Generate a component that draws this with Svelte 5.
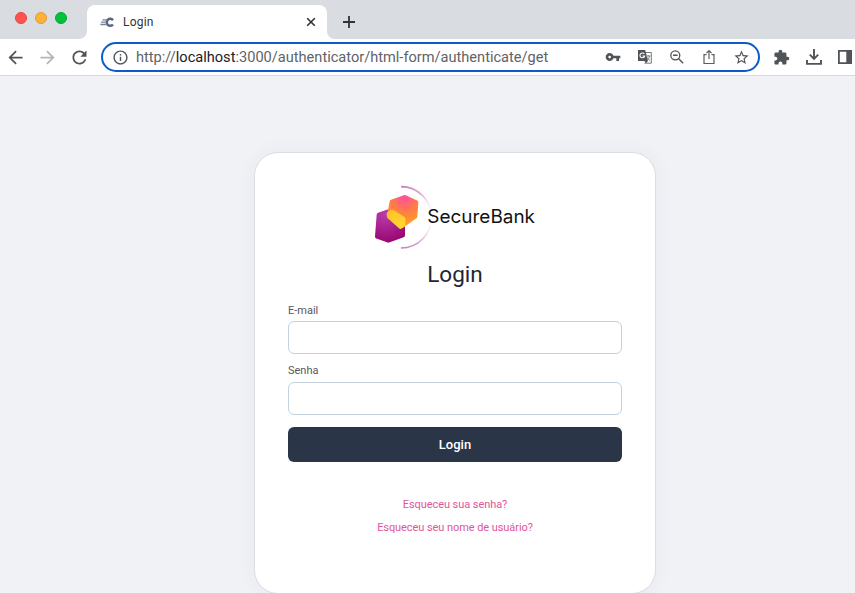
<script>
  let email = $state('');
  let password = $state('');
</script>

<div class="window">
  <header class="tabstrip">
    <div class="lights">
      <span class="light red"></span>
      <span class="light amber"></span>
      <span class="light green"></span>
    </div>
    <div class="tab">
      <svg class="favicon" width="14" height="12" viewBox="0 0 42 36">
        <path d="M39 12.500A10.500 10.500 0 1 0 39 25.500" fill="none" stroke="#5b6682" stroke-width="7.500" />
        <path d="M7 11.500h15M3 18.500h14M1 25.500h20" stroke="#7b849b" stroke-width="4" />
      </svg>
      <span class="tab-title">Login</span>
      <svg class="close" width="10" height="10" viewBox="0 0 10 10"><path d="M1.200 1.200l7.600 7.600M8.800 1.200L1.200 8.800" stroke="#303236" stroke-width="1.600" /></svg>
    </div>
    <svg class="plus" width="12" height="12" viewBox="0 0 12 12"><path d="M6 0v12M0 6h12" stroke="#303236" stroke-width="1.800" /></svg>
  </header>

  <div class="toolbar">
    <svg class="nav" width="21" height="21" viewBox="0 0 24 24"><path fill="#505357" d="M20 11H7.830l5.590-5.590L12 4l-8 8 8 8 1.410-1.410L7.830 13H20v-2z" /></svg>
    <svg class="nav" width="21" height="21" viewBox="0 0 24 24"><path fill="#b3b5b7" d="M12 4l-1.410 1.410L16.170 11H4v2h12.170l-5.580 5.590L12 20l8-8z" /></svg>
    <svg class="nav" width="21" height="21" viewBox="0 0 24 24"><path fill="#505357" d="M17.650 6.350C16.200 4.900 14.210 4 12 4c-4.420 0-7.990 3.580-7.990 8s3.570 8 7.990 8c3.730 0 6.840-2.550 7.730-6h-2.080c-.82 2.330-3.040 4-5.650 4-3.310 0-6-2.690-6-6s2.690-6 6-6c1.660 0 3.140.69 4.220 1.780L13 11h7V4l-2.350 2.350z" /></svg>
    <div class="omnibox">
      <svg class="info" width="17" height="17" viewBox="0 0 24 24"><path fill="#505357" d="M11 7h2v2h-2zm0 4h2v6h-2zm1-9C6.480 2 2 6.480 2 12s4.480 10 10 10 10-4.480 10-10S17.520 2 12 2zm0 18c-4.410 0-8-3.590-8-8s3.590-8 8-8 8 3.590 8 8-3.590 8-8 8z" /></svg>
      <span class="url">http://<b>localhost</b>:3000/authenticator/html-form/authenticate/get</span>
      <div class="actions">
        <svg width="16" height="16" viewBox="0 0 24 24"><path fill="#505357" d="M12.650 10C11.830 7.670 9.610 6 7 6c-3.310 0-6 2.690-6 6s2.690 6 6 6c2.610 0 4.830-1.670 5.650-4H17v4h4v-4h2v-4H12.650zM7 14c-1.100 0-2-.9-2-2s.9-2 2-2 2 .9 2 2-.9 2-2 2z" /></svg>
        <svg width="16" height="16" viewBox="0 0 16 16">
          <path d="M6.500 3.500h7.800v10.700H7.500" fill="#fff" stroke="#74777a" stroke-width="1" />
          <path d="M1 1h7.200l2.800 11H1z" fill="#505357" />
          <path d="M7.300 4.900A2.400 2.400 0 1 0 7.700 7H5.500" fill="none" stroke="#fff" stroke-width="1.100" />
          <path d="M9.500 7h4M11.300 6v1M10 11.500c1.500-1 2.200-2.500 2.400-4.500M10.200 8.500c.7 1.300 1.400 2.200 2.800 3" fill="none" stroke="#74777a" stroke-width=".9" />
          <path d="M7.500 12h3.500l-2.200 2.300z" fill="#505357" />
        </svg>
        <svg width="16" height="16" viewBox="0 0 16 16"><circle cx="6.300" cy="6.300" r="4.500" fill="none" stroke="#505357" stroke-width="1.300" /><path d="M9.700 9.700l4.500 4.500M4 6.300h4.600" stroke="#505357" stroke-width="1.400" /></svg>
        <svg width="16" height="16" viewBox="0 0 16 16"><path d="M5.500 5.700H3v8.800h10V5.700h-2.500M8 10V1.500M5.400 4.100L8 1.500l2.600 2.600" fill="none" stroke="#5b5e62" stroke-width="1.200" /></svg>
        <svg width="17" height="17" viewBox="0 0 24 24"><path fill="#505357" d="M22 9.240l-7.190-.62L12 2 9.190 8.630 2 9.240l5.460 4.730L5.820 21 12 17.270 18.180 21l-1.630-7.030L22 9.240zM12 15.400l-3.760 2.270 1-4.280-3.320-2.880 4.380-.38L12 6.100l1.710 4.040 4.380.38-3.320 2.880 1 4.280L12 15.400z" /></svg>
      </div>
    </div>
    <div class="extras">
      <svg width="17" height="17" viewBox="0 0 24 24"><path fill="#505357" d="M20.500 11H19V7c0-1.100-.9-2-2-2h-4V3.500C13 2.120 11.880 1 10.500 1S8 2.120 8 3.500V5H4c-1.100 0-1.990.9-1.990 2v3.800H3.500c1.490 0 2.700 1.210 2.700 2.700s-1.210 2.700-2.700 2.700H2V20c0 1.100.9 2 2 2h3.800v-1.500c0-1.490 1.210-2.700 2.700-2.700 1.490 0 2.700 1.210 2.700 2.700V22H17c1.100 0 2-.9 2-2v-4h1.500c1.380 0 2.500-1.120 2.500-2.500S21.880 11 20.500 11z" /></svg>
      <svg width="16" height="16" viewBox="0 0 16 16"><path d="M8 0v9.500M3.800 5.700L8 9.900l4.200-4.200M1 11v3.900h14V11" fill="none" stroke="#505357" stroke-width="1.900" /></svg>
      <svg width="14" height="14" viewBox="0 0 14 14"><path fill="#505357" fill-rule="evenodd" d="M0 0h14v14H0zM1.800 1.800v10.400H8.300V1.800z" /></svg>
    </div>
  </div>

  <main>
    <form class="card" onsubmit={(e) => e.preventDefault()}>
      <svg class="logo" width="180" height="80" viewBox="0 0 540 240" role="img" aria-label="SecureBank">
        <defs>
          <radialGradient id="sun" gradientUnits="userSpaceOnUse" cx="119" cy="66" r="78">
            <stop offset="0" stop-color="#ff50a0" />
            <stop offset=".5" stop-color="#ff7b46" />
            <stop offset="1" stop-color="#ff9d28" />
          </radialGradient>
          <radialGradient id="plum" gradientUnits="userSpaceOnUse" cx="60" cy="115" r="88">
            <stop offset="0" stop-color="#b93cab" />
            <stop offset="1" stop-color="#960570" />
          </radialGradient>
          <linearGradient id="gold" gradientUnits="userSpaceOnUse" x1="66" y1="102" x2="122" y2="158">
            <stop offset="0" stop-color="#ffc02c" />
            <stop offset="1" stop-color="#ffda2c" />
          </linearGradient>
          <linearGradient id="arc" gradientUnits="userSpaceOnUse" x1="108" y1="0" x2="200" y2="0">
            <stop offset="0" stop-color="#c878b8" />
            <stop offset=".6" stop-color="#dda5d0" />
            <stop offset="1" stop-color="#fff" />
          </linearGradient>
        </defs>
        <path d="M108 32A92 92 0 0 1 108 216" fill="none" stroke="url(#arc)" stroke-width="5" />
        <g stroke-width="12" stroke-linejoin="round">
          <path d="M41 116L74 105L114 130V178L70 194L36 182Z" fill="url(#plum)" stroke="url(#plum)" />
          <path d="M80 77L120 63L154 79L151 122L108 152L72 119Z" fill="url(#sun)" stroke="url(#sun)" />
          <path d="M71 113L82 107L115 128V147L106 152L72 122Z" fill="url(#gold)" stroke="url(#gold)" />
        </g>
        <text x="187" y="140" textLength="323" lengthAdjust="spacingAndGlyphs">SecureBank</text>
      </svg>
      <h1>Login</h1>
      <label for="email">E-mail</label>
      <input id="email" type="text" bind:value={email} />
      <label class="second" for="password">Senha</label>
      <input id="password" type="password" bind:value={password} />
      <button type="submit">Login</button>
      <div class="links">
        <a href="#senha">Esqueceu sua senha?</a>
        <a href="#usuario">Esqueceu seu nome de usuário?</a>
      </div>
    </form>
  </main>
</div>

<style>
  .window {
    width: 855px;
    height: 593px;
    overflow: hidden;
    display: flex;
    flex-direction: column;
    background: #f1f2f6;
    font-family: Roboto, 'Liberation Sans', sans-serif;
  }
  svg { display: block; flex: none; }
  .tabstrip {
    height: 39px;
    flex: none;
    display: flex;
    background: #d9dce1;
  }
  .lights { display: flex; gap: 8px; padding: 12px 0 0 15px; width: 87px; box-sizing: border-box; }
  .light { width: 12px; height: 12px; border-radius: 50%; box-sizing: border-box; border: 1px solid; }
  .red { background: #ff544f; border-color: #e5443f; }
  .amber { background: #ffb139; border-color: #e29a31; }
  .green { background: #00c23b; border-color: #00a833; }
  .tab {
    position: relative;
    width: 240px;
    height: 34px;
    margin-top: 5px;
    padding: 0 11px 0 13px;
    box-sizing: border-box;
    display: flex;
    align-items: center;
    background: #fff;
    border-radius: 8px 8px 0 0;
  }
  .tab::before, .tab::after {
    content: '';
    position: absolute;
    bottom: 0;
    width: 8px;
    height: 8px;
  }
  .tab::before { left: -8px; background: radial-gradient(circle at 0 0, #d9dce1 7.5px, #fff 8.5px); }
  .tab::after { right: -8px; background: radial-gradient(circle at 100% 0, #d9dce1 7.5px, #fff 8.5px); }
  .tab-title { margin-left: 9px; font-size: 12px; letter-spacing: 0.2px; color: #303236; flex: 1; }
  .plus { margin: 16px 0 0 16px; }
  .toolbar {
    height: 37px;
    flex: none;
    box-sizing: border-box;
    border-bottom: 1px solid #d6d8dc;
    background: #fff;
    display: flex;
    align-items: center;
    padding-left: 5px;
  }
  .nav { margin-right: 11px; }
  .omnibox {
    width: 659px;
    height: 30px;
    box-sizing: border-box;
    border: 2px solid #0b5cca;
    border-radius: 15px;
    display: flex;
    align-items: center;
    padding: 0 8px 0 8.5px;
  }
  .url { margin-left: 7.5px; font-size: 14.6px; color: #5f6368; white-space: nowrap; flex: 1; }
  .url b { font-weight: 400; color: #202124; }
  .actions { display: flex; align-items: center; gap: 16px; }
  .extras { display: flex; align-items: center; gap: 16px; margin-left: 12.5px; }
  main { flex: 1; display: flex; justify-content: center; align-items: flex-start; padding: 76px 0 0 55px; }
  .card {
    width: 402px;
    height: 442px;
    flex: none;
    box-sizing: border-box;
    border: 1px solid #dcdde2;
    border-radius: 24px;
    background: #fff;
    box-shadow: 0 0 20px rgba(50, 50, 93, 0.05);
    padding: 23px 33px 0;
    display: flex;
    flex-direction: column;
  }
  .logo { align-self: center; }
  .logo text { font-family: Inter, 'Liberation Sans', sans-serif; font-size: 55px; font-weight: 400; fill: #101214; }
  h1 { margin: 3px 0 0; font-size: 22.5px; line-height: 30px; font-weight: 400; text-align: center; color: #1f2638; }
  label { margin-top: 15px; font-size: 11px; line-height: 14px; color: #57595d; }
  label.second { margin-top: 10px; }
  input {
    height: 33px;
    margin: 4px 0 0;
    padding: 0 10px;
    box-sizing: border-box;
    border: 1px solid #c3d2dc;
    border-radius: 6px;
    background: #fff;
    outline: none;
  }
  h1 + label + input { margin-top: 3px; }
  button {
    height: 35px;
    margin-top: 12px;
    padding: 0;
    border: 0;
    border-radius: 6px;
    background: #2b3548;
    color: #fff;
    font: 500 13px Roboto, sans-serif;
  }
  .links { margin-top: 36px; display: flex; flex-direction: column; align-items: center; gap: 9px; }
  a { font-size: 11px; line-height: 14px; letter-spacing: -0.07px; color: #e2549c; text-decoration: none; }
</style>
